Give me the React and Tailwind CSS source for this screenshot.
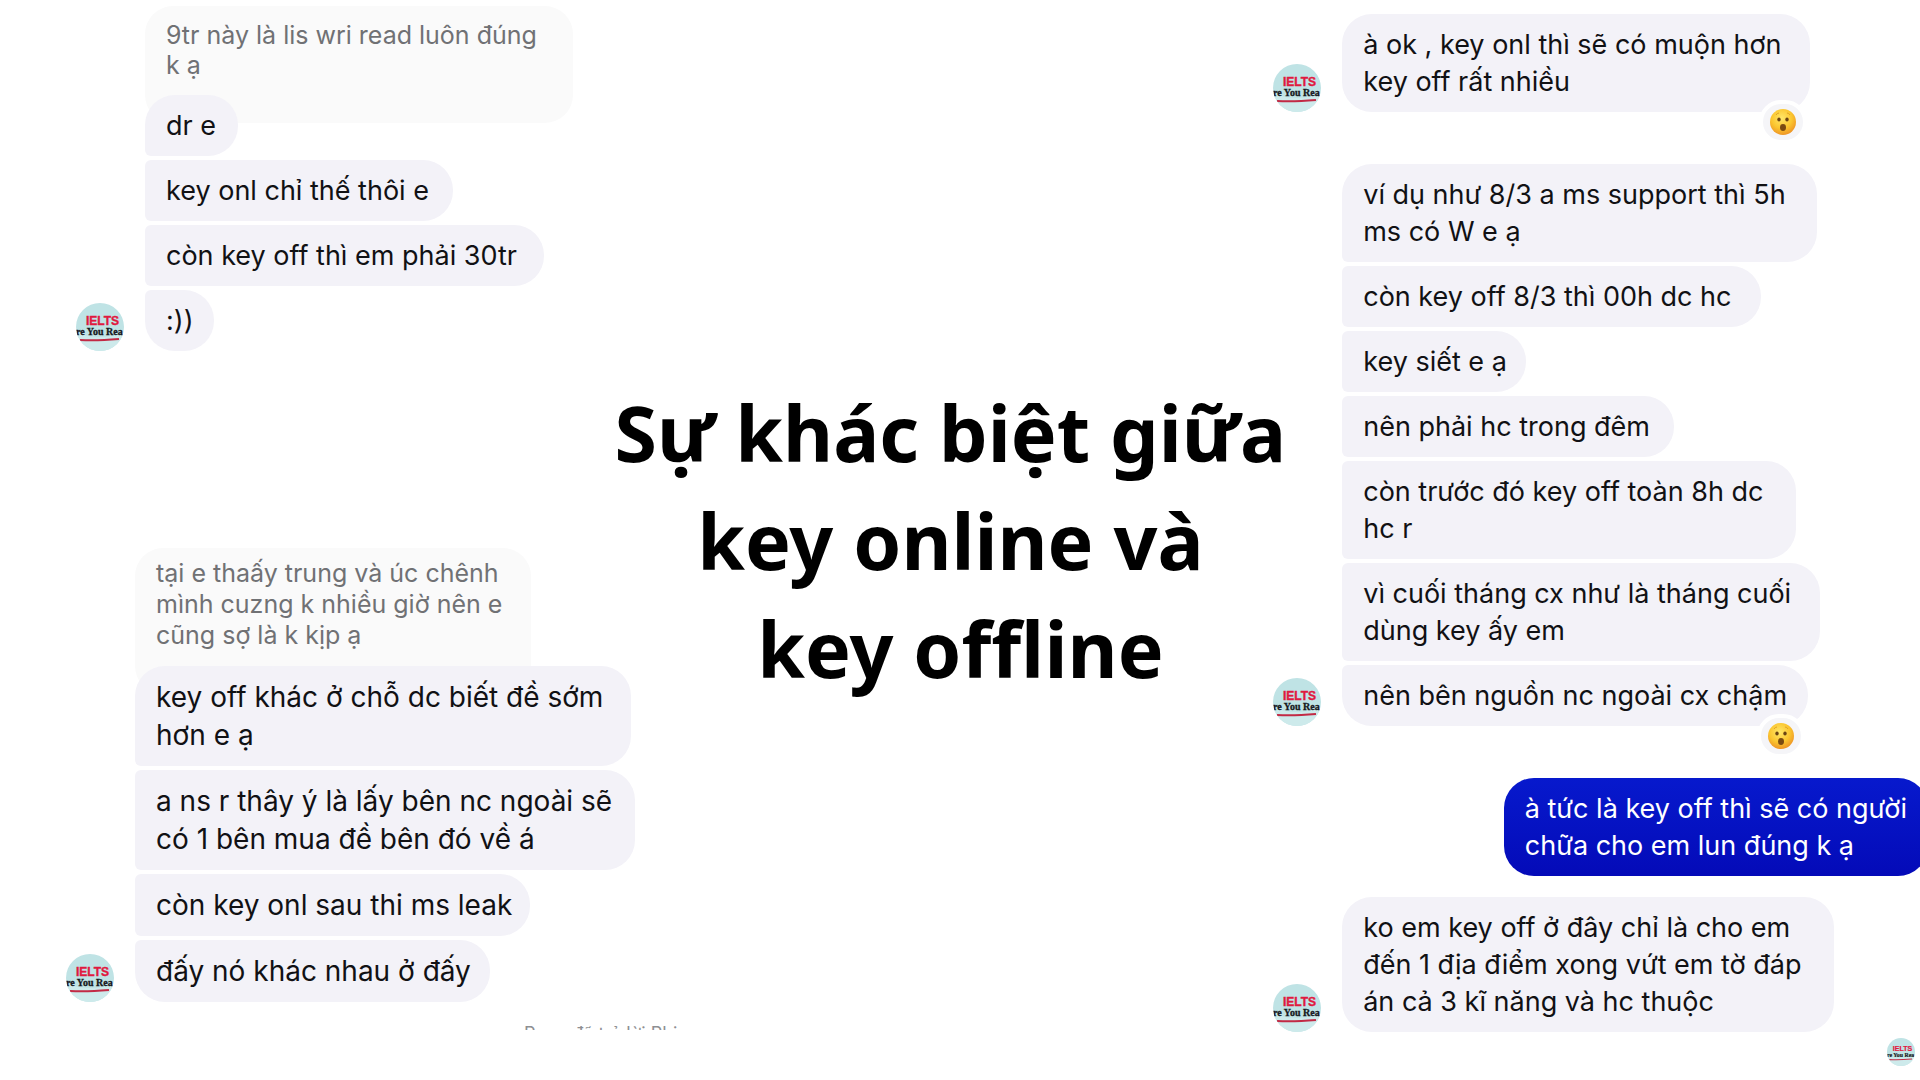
const priceChat = [
  { text: "dr e", width: "w-[93px]" },
  { text: "key onl chỉ thế thôi e", width: "w-[308px]" },
  { text: "còn key off thì em phải 30tr", width: "w-[399px]" },
  { text: ":))", width: "w-[69px]" },
];

const differenceChat = [
  { text: "key off khác ở chỗ dc biết đề sớm\nhơn e ạ", width: "w-[496px]" },
  { text: "a ns r thây ý là lấy bên nc ngoài sẽ\ncó 1 bên mua đề bên đó về á", width: "w-[500px]" },
  { text: "còn key onl sau thi ms leak", width: "w-[395px]" },
  { text: "đấy nó khác nhau ở đấy", width: "w-[355px]" },
];

const lateKeyChat = [
  { text: "à ok , key onl thì sẽ có muộn hơn\nkey off rất nhiều", width: "w-[468px]", reaction: true },
];

const exampleChat = [
  { text: "ví dụ như 8/3 a ms support thì 5h\nms có W e ạ", width: "w-[475px]" },
  { text: "còn key off 8/3 thì 00h dc hc", width: "w-[419px]" },
  { text: "key siết e ạ", width: "w-[184px]" },
  { text: "nên phải hc trong đêm", width: "w-[332px]" },
  { text: "còn trước đó key off toàn 8h dc\nhc r", width: "w-[454px]" },
  { text: "vì cuối tháng cx như là tháng cuối\ndùng key ấy em", width: "w-[478px]" },
  { text: "nên bên nguồn nc ngoài cx chậm", width: "w-[466px]", reaction: true },
];

const answerChat = [
  {
    text: "ko em key off ở đây chỉ là cho em\nđến 1 địa điểm xong vứt em tờ đáp\nán cả 3 kĩ năng và hc thuộc",
    width: "w-[492px]",
  },
];

function Avatar({ className }) {
  return (
    <svg viewBox="0 0 48 48" className={`shrink-0 rounded-full ${className}`} role="img" aria-label="IELTS">
      <rect width="48" height="48" fill="#bfe3e5" />
      <path d="M0 30 Q24 38 48 30 V48 H0Z" fill="#cdeaeb" />
      <text x="10" y="22" fontSize="12" fontWeight="700" fill="#e0193f" stroke="#e0193f" strokeWidth="0.4" fontFamily="Liberation Sans, sans-serif">
        IELTS
      </text>
      <text x="0" y="32" fontSize="10" fontWeight="700" fill="#16181c" stroke="#16181c" strokeWidth="0.3" fontFamily="Liberation Serif, serif">
        re You Rea
      </text>
      <path d="M4 37 Q20 38 43 36" fill="none" stroke="#c22a45" strokeWidth="2" />
    </svg>
  );
}

function Reaction() {
  return (
    <span className="absolute right-[3px] -bottom-8 flex h-11 w-12 items-center justify-center rounded-full border-4 border-white bg-[#f5f5f8]">
      <svg viewBox="0 0 26 26" className="h-[26px] w-[26px] shrink-0">
        <defs>
          <radialGradient id="face" cx="45%" cy="35%" r="65%">
            <stop offset="0" stopColor="#ffe76a" />
            <stop offset="0.6" stopColor="#fbc62f" />
            <stop offset="1" stopColor="#ee9526" />
          </radialGradient>
        </defs>
        <circle cx="13" cy="13" r="13" fill="url(#face)" />
        <path d="M6 6 Q7 4 9 4 M17 4 Q19 4 20 6" fill="none" stroke="#e0a325" />
        <ellipse cx="9" cy="10.5" rx="1.7" ry="2" fill="#6b4413" />
        <ellipse cx="17" cy="10.5" rx="1.7" ry="2" fill="#6b4413" />
        <ellipse cx="13" cy="18.5" rx="3" ry="3.4" fill="#7a4a12" />
      </svg>
    </span>
  );
}

function Quote({ children, className }) {
  return (
    <blockquote className={`whitespace-pre-line rounded-[28px] bg-[#fafafa] px-[21px] text-[#707174] ${className}`}>
      {children}
    </blockquote>
  );
}

function Thread({ messages, lineHeight = "leading-[37px]", textSize = "text-[27px]" }) {
  return (
    <div className="flex items-end gap-[21px]">
      <Avatar className="h-12 w-12" />
      <ul className="flex flex-col items-start gap-1">
        {messages.map((message, index) => (
          <li
            key={message.text}
            className={`relative whitespace-pre rounded-r-[30px] bg-[#f3f2f8] py-3 pl-[21px] text-[#111114] ${textSize} ${lineHeight} ${message.width} ${
              index === 0 ? "rounded-tl-[30px]" : "rounded-tl-md"
            } ${index === messages.length - 1 ? "rounded-bl-[30px]" : "rounded-bl-md"}`}
          >
            {message.text}
            {message.reaction && <Reaction />}
          </li>
        ))}
      </ul>
    </div>
  );
}

export default function App() {
  return (
    <main className="flex min-h-screen items-stretch overflow-hidden bg-white font-['Inter','Noto_Sans',sans-serif]">
      <section className="w-[33%] shrink-0">
        <div className="pt-[6px] pl-[76px]">
          <Quote className="ml-[69px] h-[117px] w-[428px] pt-[14px] text-[25px] leading-[30px]">
            {"9tr này là lis wri read luôn đúng\nk ạ"}
          </Quote>
          <div className="-mt-7">
            <Thread messages={priceChat} />
          </div>
        </div>

        <div className="pt-[197px] pl-[66px]">
          <Quote className="ml-[69px] h-[146px] w-[396px] pt-[10px] text-[25px] leading-[31px]">
            {"tại e thaấy trung và úc chênh\nmình cuzng k nhiều giờ nên e\ncũng sợ là k kịp ạ"}
          </Quote>
          <div className="-mt-7">
            <Thread messages={differenceChat} textSize="text-[28px]" lineHeight="leading-[38px]" />
          </div>
        </div>

        {/* reply label, only its top edge shows */}
        <p className="mt-6 -mr-20 ml-[524px] h-1 overflow-hidden whitespace-nowrap text-lg leading-4 text-[#8e8f93]">
          Page đã trả lời Phi
        </p>
      </section>

      <section className="flex min-w-0 flex-1 justify-center">
        <h1 className="mt-[379px] whitespace-pre text-center font-['Noto_Sans',sans-serif] text-[77px] leading-[108px] font-bold text-black">
          {"Sự khác biệt giữa\nkey online và\n\u00a0key offline"}
        </h1>
      </section>

      <section className="flex w-[34%] shrink-0 flex-col pt-[14px] pl-[6px]">
        <Thread messages={lateKeyChat} />
        <div className="mt-[52px]">
          <Thread messages={exampleChat} />
        </div>
        <p className="mt-[52px] -mr-2 self-end whitespace-pre rounded-[30px] bg-linear-to-b from-[#0719cd] to-[#040ab8] py-3 pr-[21px] pl-[21px] text-[27px] leading-[37px] text-white">
          {"à tức là key off thì sẽ có người\nchữa cho em lun đúng k ạ"}
        </p>
        <div className="mt-[21px]">
          <Thread messages={answerChat} />
        </div>
        <div className="mt-[6px] mr-[5px] self-end">
          <Avatar className="h-7 w-7" />
        </div>
      </section>
    </main>
  );
}
